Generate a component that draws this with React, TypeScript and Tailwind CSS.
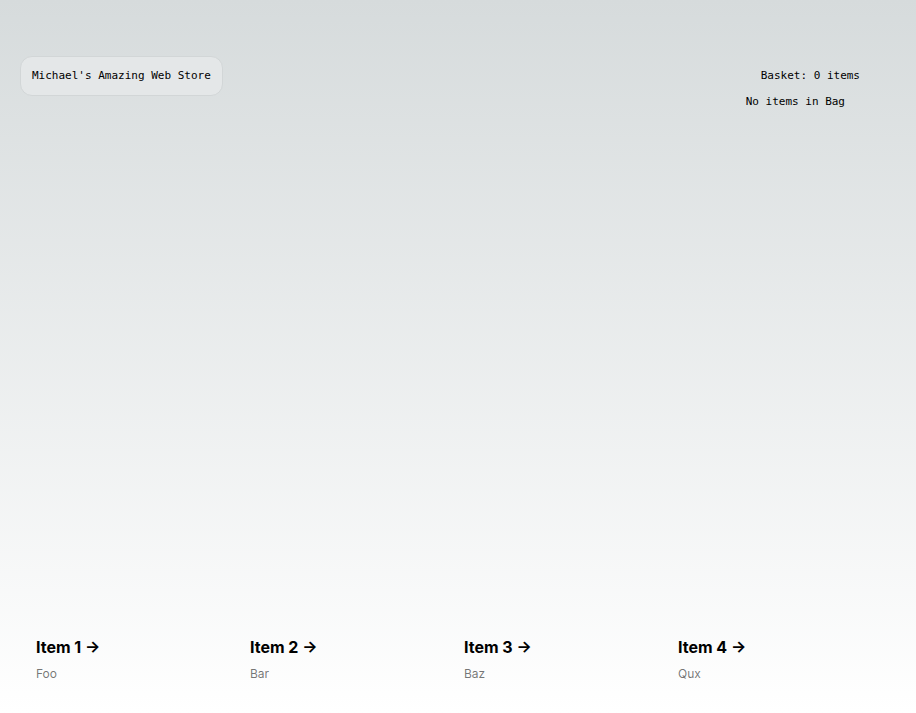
const items = [
  { title: "Item 1", desc: "Foo" },
  { title: "Item 2", desc: "Bar" },
  { title: "Item 3", desc: "Baz" },
  { title: "Item 4", desc: "Qux" },
];

export default function App() {
  return (
    <main className="flex min-h-screen flex-col justify-between bg-[linear-gradient(to_bottom,#d6dbdc,#ffffff)] px-5 pt-[56px] pb-[15px] text-black">
      <div className="flex items-start justify-between font-['DejaVu_Sans_Mono',monospace] text-[11px] leading-4">
        <p className="rounded-xl border border-[#d2d6d7] bg-[#e4e7e8] px-[11px] py-[11px]">
          Michael's Amazing Web Store
        </p>
        <div className="flex flex-col items-end pt-[12px] pr-[36px]">
          <p>Basket: 0 items</p>
          <p className="mt-[10px] mr-[15px]">No items in Bag</p>
        </div>
      </div>

      <div className="grid w-[856px] grid-cols-4 font-['Inter',sans-serif]">
        {items.map((item) => (
          <a key={item.title} href="#" className="px-4 py-4">
            <h2 className="mb-[7px] text-base leading-6 font-bold">
              {item.title} <span>-&gt;</span>
            </h2>
            <p className="text-xs leading-4 text-black/55">{item.desc}</p>
          </a>
        ))}
      </div>
    </main>
  );
}
